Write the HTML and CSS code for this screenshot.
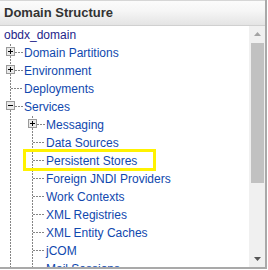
FILE: index.html
```html
<!DOCTYPE html>
<html>
<head>
<meta charset="utf-8">
<link rel="stylesheet" href="styles.css">
</head>
<body>
<div class="panel">
  <div class="header">Domain Structure</div>
  <div class="body">
    <div class="tree">
      <div class="row root"><a class="lbl rootlbl">obdx_domain</a></div>
      <ul class="branch l1">
        <li><div class="row"><svg class="tog" width="9" height="9" viewBox="0 0 9 9"><rect x="0.5" y="0.5" width="8" height="8" fill="#e9e9e9" stroke="#9a9a9a"/><path d="M2 4.5h5M4.5 2v5" stroke="#000"/></svg><span class="conn short"></span><a class="lbl">Domain Partitions</a></div></li>
        <li><div class="row"><svg class="tog" width="9" height="9" viewBox="0 0 9 9"><rect x="0.5" y="0.5" width="8" height="8" fill="#e9e9e9" stroke="#9a9a9a"/><path d="M2 4.5h5M4.5 2v5" stroke="#000"/></svg><span class="conn short"></span><a class="lbl">Environment</a></div></li>
        <li><div class="row"><span class="conn long"></span><a class="lbl">Deployments</a></div></li>
        <li>
          <div class="row"><svg class="tog" width="9" height="9" viewBox="0 0 9 9"><rect x="0.5" y="0.5" width="8" height="8" fill="#e9e9e9" stroke="#9a9a9a"/><path d="M2 4.5h5" stroke="#000"/></svg><span class="conn short"></span><a class="lbl">Services</a></div>
          <ul class="branch l2">
            <li><div class="row"><svg class="tog" width="9" height="9" viewBox="0 0 9 9"><rect x="0.5" y="0.5" width="8" height="8" fill="#e9e9e9" stroke="#9a9a9a"/><path d="M2 4.5h5M4.5 2v5" stroke="#000"/></svg><span class="conn short"></span><a class="lbl">Messaging</a></div></li>
            <li><div class="row"><span class="conn long"></span><a class="lbl">Data Sources</a></div></li>
            <li><div class="row"><span class="conn long"></span><a class="lbl">Persistent Stores</a></div></li>
            <li><div class="row"><span class="conn long"></span><a class="lbl">Foreign JNDI Providers</a></div></li>
            <li><div class="row"><span class="conn long"></span><a class="lbl">Work Contexts</a></div></li>
            <li><div class="row"><span class="conn long"></span><a class="lbl">XML Registries</a></div></li>
            <li><div class="row"><span class="conn long"></span><a class="lbl">XML Entity Caches</a></div></li>
            <li><div class="row"><span class="conn long"></span><a class="lbl">jCOM</a></div></li>
            <li><div class="row"><span class="conn long"></span><a class="lbl">Mail Sessions</a></div></li>
            <li><div class="row"><span class="conn long"></span><a class="lbl">File T3</a></div></li>
            <li><div class="row"><span class="conn long"></span><a class="lbl">JTA</a></div></li>
          </ul>
        </li>
        <li><div class="row"><span class="conn long"></span><a class="lbl">Security Realms</a></div></li>
        <li><div class="row"><span class="conn long"></span><a class="lbl">Interoperability</a></div></li>
      </ul>
    </div>
    <div class="scroll">
      <div class="sbtn up"><svg width="7" height="4" viewBox="0 0 7 4"><polygon points="3.5,0 7,4 0,4" fill="#a3a3a3"/></svg></div>
      <div class="thumb"></div>
      <div class="track"></div>
      <div class="sbtn down"><svg width="7" height="4" viewBox="0 0 7 4"><polygon points="0,0 7,0 3.5,4" fill="#555"/></svg></div>
    </div>
  </div>
  <div class="highlight"></div>
</div>
</body>
</html>
```

FILE: styles.css
```css
html, body {
  margin: 0;
  padding: 0;
  background: #ffffff;
}
body {
  width: 268px;
  height: 270px;
  overflow: hidden;
  font-family: "Liberation Sans", Arial, sans-serif;
}
.panel {
  position: relative;
  width: 265px;
  height: 267px;
  border-right: 2px solid #a9a9a9;
  border-bottom: 2px solid #a9a9a9;
  display: flex;
  flex-direction: column;
  background: #ffffff;
}
.header {
  height: 24px;
  line-height: 24px;
  border-top: 1px solid #d6d6d6;
  border-bottom: 1px solid #d0d0d0;
  background: linear-gradient(#fbfbfb, #f6f6f6 40%, #e4e4e4);
  padding-left: 4px;
  font-size: 13px;
  font-weight: bold;
  color: #333333;
  flex: none;
}
.body {
  flex: 1;
  display: flex;
  min-height: 0;
}
.tree {
  flex: 1;
  overflow: hidden;
  font-size: 12px;
}
.row {
  display: flex;
  height: 18px;
  line-height: 18px;
  white-space: nowrap;
}
.root {
  padding-left: 4px;
}
.lbl {
  color: #1048ae;
  padding-left: 1px;
  cursor: pointer;
}
.rootlbl {
  color: #24248a;
  padding-left: 0;
}
ul.branch {
  list-style: none;
  margin: 0;
  padding: 0 0 0 1px;
  background-image: repeating-linear-gradient(to bottom, #858585 0, #858585 2px, transparent 2px, transparent 3px);
  background-repeat: no-repeat;
  background-position: left top;
  background-size: 1px 100%;
}
ul.l1 {
  margin-left: 10px;
}
ul.l2 {
  margin-left: 21px;
}
li {
  margin: 0;
  padding: 0;
}
.tog {
  flex: none;
  display: block;
  margin-left: -5px;
  margin-top: 3px;
}
.conn {
  flex: none;
  height: 1px;
  margin-top: 8px;
  background-image: repeating-linear-gradient(to right, #858585 0, #858585 2px, transparent 2px, transparent 3px);
}
.conn.short {
  width: 8px;
}
.conn.long {
  width: 12px;
}
.scroll {
  flex: none;
  width: 16px;
  background: #f0f0f0;
  display: flex;
  flex-direction: column;
}
.sbtn {
  flex: none;
  height: 17px;
  display: flex;
  justify-content: center;
  padding-left: 1px;
  box-sizing: border-box;
}
.sbtn svg {
  display: block;
}
.up svg {
  margin-top: 6px;
}
.down svg {
  margin-top: 7px;
}
.thumb {
  flex: none;
  height: 140px;
  margin: 0 1px 0 2px;
  background: #c1c1c1;
}
.track {
  flex: 1;
}
.highlight {
  position: absolute;
  left: 23px;
  top: 149px;
  width: 133px;
  height: 22px;
  box-sizing: border-box;
  border: 3px solid #fff200;
  pointer-events: none;
}
```
